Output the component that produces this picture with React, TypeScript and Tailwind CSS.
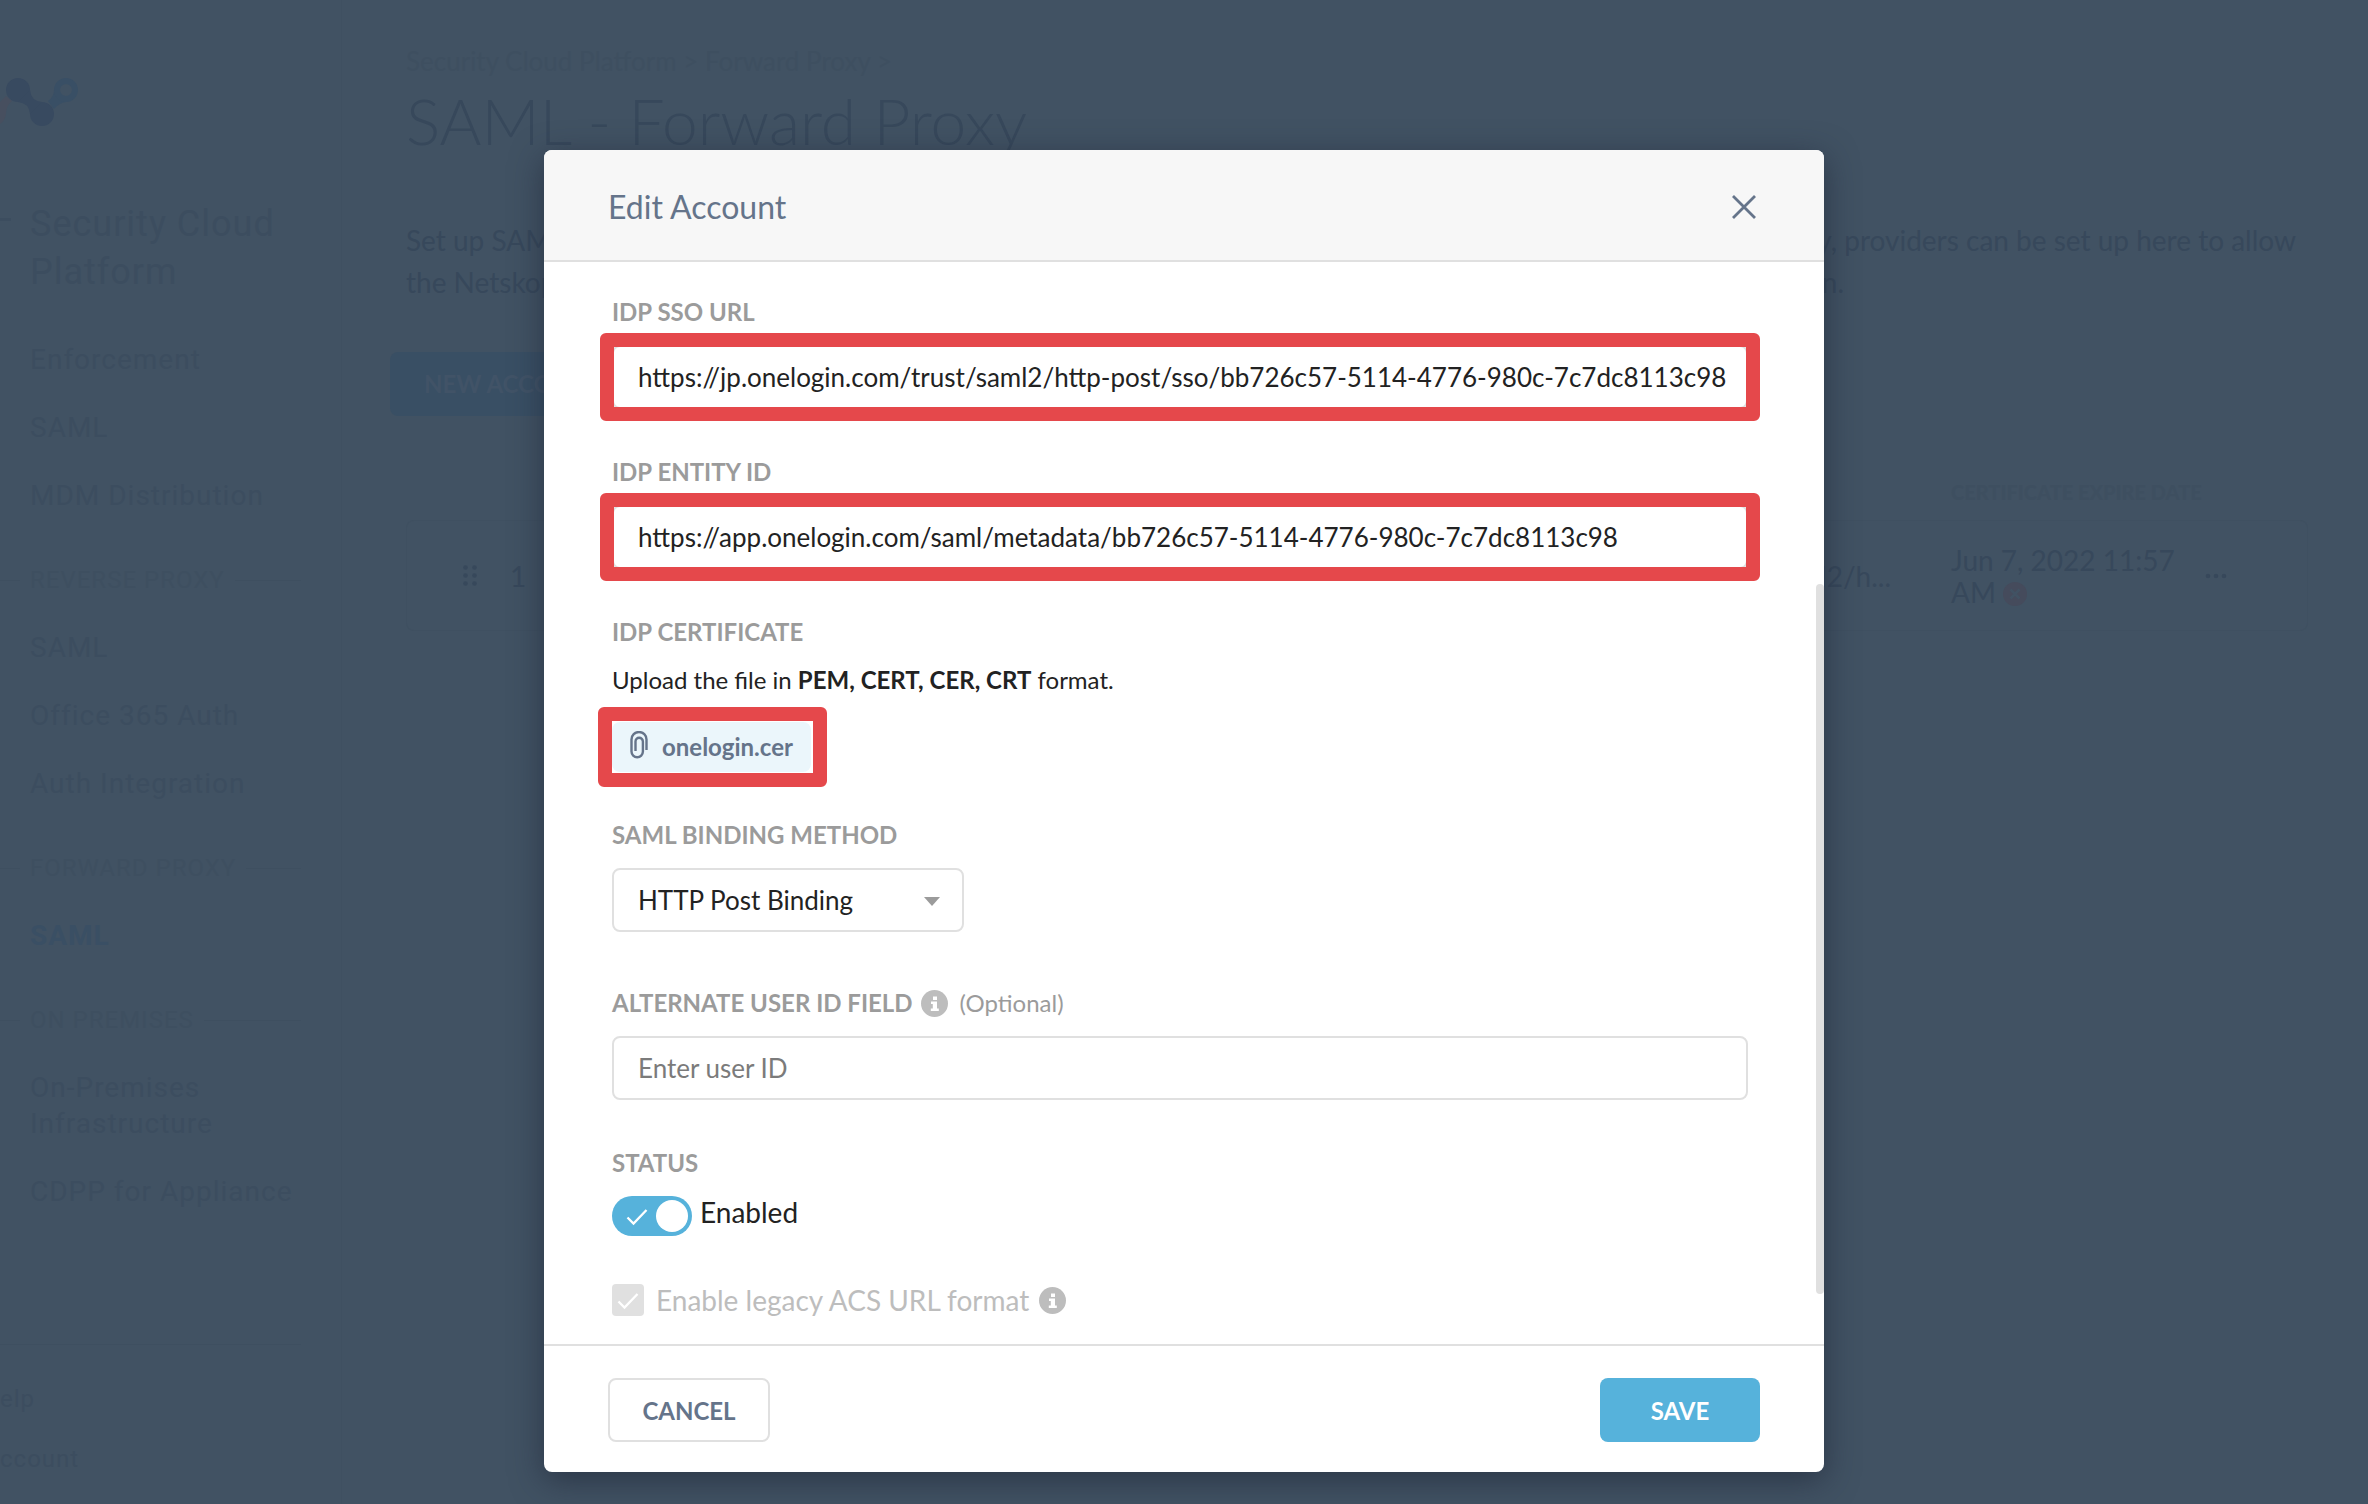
import { useState } from 'react';
import type { ReactNode } from 'react';

const RED_FRAME = 'pointer-events-none absolute rounded-[6px] border-[14px] border-[#e5484b]';
const LABEL = 'block text-[24px] leading-[30px] font-bold text-[#9b9b9b]';
const INPUT =
  'block h-16 w-full rounded-[8px] border-2 border-[#e0e0e0] bg-white pr-2 pl-6 text-[26px] text-[#222] outline-none placeholder:text-[#7b7b7b]';

const MAIN_LINKS = ['Enforcement', 'SAML', 'MDM Distribution'];
const REVERSE_LINKS = ['SAML', 'Office 365 Auth', 'Auth Integration'];
const PREMISES_LINKS = ['On-Premises Infrastructure', 'CDPP for Appliance'];

function Logo() {
  return (
    <svg width="78" height="48" viewBox="0 0 78 48" aria-label="Netskope" className="mt-[78px] block">
      <path d="M0 46 V24 L6 18 L12 23 Q6 28 6 36 Q5 43 0 46 Z" fill="#474f5f" />
      <circle cx="18" cy="12" r="12" fill="#384a60" />
      <circle cx="42" cy="36" r="12" fill="#384a60" />
      <path d="M30 12 Q31 23 42 24 L30 36 Q29 25 18 24 Z" fill="#384a60" />
      <path d="M48 23 Q54 19 54 12 L66 24 Q59 25 54 31 Z" fill="#394f65" />
      <circle cx="66" cy="12" r="9" fill="none" stroke="#394f65" strokeWidth="6" />
    </svg>
  );
}

function NavLinks({ items }: { items: string[] }) {
  return (
    <ul className="flex flex-col gap-8 pl-[30px]">
      {items.map((t) => (
        <li key={t}>
          <a href="#" className="block text-[28px] leading-9 tracking-[1px]">{t}</a>
        </li>
      ))}
    </ul>
  );
}

function NavHeading({ children }: { children: ReactNode }) {
  return (
    <div className="mt-[50px] mb-[34px] flex items-center gap-[10px] text-[#3e4f60]">
      <span className="h-px w-5 bg-[#3e4f60]" />
      <h3 className="text-[24px] leading-8 tracking-[1px]">{children}</h3>
      <span className="h-px flex-1 bg-[#3e4f60]" />
    </div>
  );
}

function Sidebar() {
  return (
    <aside className="w-[342px] shrink-0 border-r border-[#3f5061] pr-10 font-['Roboto',sans-serif] text-[#3c4d5f]">
      <Logo />
      <div className="mt-[74px] flex items-start gap-[19px]">
        <span className="mt-[18px] h-[3px] w-[11px] shrink-0 bg-[#3c4d5f]" />
        <h2 className="text-[36px] leading-[48px] tracking-[1px]">Security Cloud Platform</h2>
      </div>
      <nav className="mt-[46px]">
        <NavLinks items={MAIN_LINKS} />
        <NavHeading>REVERSE PROXY</NavHeading>
        <NavLinks items={REVERSE_LINKS} />
        <NavHeading>FORWARD PROXY</NavHeading>
        <a href="#" className="block pl-[30px] text-[28px] leading-9 font-bold tracking-[1px] text-[#3a4f64]">SAML</a>
        <NavHeading>ON PREMISES</NavHeading>
        <NavLinks items={PREMISES_LINKS} />
      </nav>
      <div className="mt-[134px] flex flex-col gap-7 border-t border-[#3e4f60] pt-[38px] text-[24px] leading-8 tracking-[1px]">
        <a href="#">elp</a>
        <a href="#">ccount</a>
      </div>
    </aside>
  );
}

function AccountsTable() {
  const td = 'h-[111px] border-y border-[#3f5061] p-0 align-middle';
  return (
    <table className="mt-16 w-full table-fixed border-separate border-spacing-0 text-left text-[28px] leading-8 text-[#37485b]">
      <colgroup>
        <col className="w-[104px]" />
        <col className="w-[100px]" />
        <col />
        <col className="w-[254px]" />
        <col className="w-[103px]" />
      </colgroup>
      <thead>
        <tr className="text-[20px] leading-6 text-[#3e4f60]">
          <th /><th /><th />
          <th className="p-0 pb-4 font-black whitespace-nowrap">CERTIFICATE EXPIRE DATE</th>
          <th />
        </tr>
      </thead>
      <tbody>
        <tr>
          <td className={`${td} rounded-l-[8px] border-l pl-14`}>
            <svg width="14" height="21" viewBox="0 0 14 21" fill="currentColor">
              {[2.5, 10.5, 18.5].map((cy) => (
                <g key={cy}><circle cx="2.5" cy={cy} r="2.3" /><circle cx="11.5" cy={cy} r="2.3" /></g>
              ))}
            </svg>
          </td>
          <td className={td}>1</td>
          <td className={`${td} pr-[60px] text-right`}>saml2/h...</td>
          <td className={td}>
            Jun 7, 2022 11:57 AM{' '}
            <svg width="24" height="24" viewBox="0 0 24 24" className="inline-block align-[-3px]">
              <circle cx="12" cy="12" r="12" fill="#454b5c" />
              <path d="M7.5 7.5l9 9M16.5 7.5l-9 9" stroke="#415263" strokeWidth="2.6" />
            </svg>
          </td>
          <td className={`${td} rounded-r-[8px] border-r`}>
            <svg width="22" height="6" viewBox="0 0 22 6" fill="currentColor">
              <circle cx="3" cy="3" r="2.3" /><circle cx="11" cy="3" r="2.3" /><circle cx="19" cy="3" r="2.3" />
            </svg>
          </td>
        </tr>
      </tbody>
    </table>
  );
}

function Page() {
  return (
    <main className="min-w-0 flex-1 pt-[45px] pr-[60px] pl-16">
      <div className="text-[26px] leading-8 text-[#3e4f60]">Security Cloud Platform &gt; Forward Proxy &gt;</div>
      <h1 className="mt-1 text-[64px] leading-[80px] font-light text-[#37485b]">SAML - Forward Proxy</h1>
      <div className="mt-[58px] text-[28px] leading-[42px] text-[#37485b]">
        <p className="flex justify-between pr-3">
          <span>Set up SAML</span>
          <span>Additionally, providers can be set up here to allow</span>
        </p>
        <p className="flex justify-between pr-[464px]">
          <span>the Netskope</span>
          <span>application.</span>
        </p>
      </div>
      <button className="mt-[49px] -ml-4 block h-16 rounded-[8px] bg-[#394f64] px-[34px] text-[24px] font-bold text-[#415367]">
        NEW ACCOUNT
      </button>
      <AccountsTable />
    </main>
  );
}

function InfoIcon() {
  return (
    <svg width="27" height="27" viewBox="0 0 27 27" className="shrink-0">
      <circle cx="13.5" cy="13.5" r="13.5" fill="#bdbdbd" />
      <path d="M12 6.5h4v3.600h-4zM10 11.600h6v7h1.800v2.400H9.800v-2.400h2v-4.600H10z" fill="#fff" />
    </svg>
  );
}

function Check({ className }: { className: string }) {
  return (
    <svg width="22" height="18" viewBox="0 0 22 18" fill="none" className={className}>
      <path d="M1.500 9.500l6 6L20.500 2" stroke="#fff" strokeWidth="2.300" />
    </svg>
  );
}

function EditAccountDialog() {
  const [ssoUrl, setSsoUrl] = useState('https://jp.onelogin.com/trust/saml2/http-post/sso/bb726c57-5114-4776-980c-7c7dc8113c98');
  const [entityId, setEntityId] = useState('https://app.onelogin.com/saml/metadata/bb726c57-5114-4776-980c-7c7dc8113c98');
  const [userId, setUserId] = useState('');
  const [enabled, setEnabled] = useState(true);

  return (
    <div
      role="dialog"
      aria-labelledby="dialog-title"
      className="w-full max-w-[1280px] overflow-hidden rounded-[8px] bg-white shadow-[0_8px_32px_rgba(30,38,55,0.65)]"
    >
      <header className="flex h-28 items-center justify-between border-b-2 border-[#e0e0e0] bg-[#f7f7f7] pt-1 pr-[68px] pl-16">
        <h2 id="dialog-title" className="text-[32px] leading-10 text-[#65748a]">Edit Account</h2>
        <button aria-label="Close">
          <svg width="24" height="24" viewBox="0 0 24 24" fill="none" stroke="#65748a" strokeWidth="2.800">
            <path d="M1 1l22 22M23 1L1 23" />
          </svg>
        </button>
      </header>

      <div className="relative pt-[35px] pr-[76px] pb-7 pl-[68px]">
        <label htmlFor="sso-url" className={LABEL}>IDP SSO URL</label>
        <div className="relative mt-[18px]">
          <input id="sso-url" className={INPUT} value={ssoUrl} onChange={(e) => setSsoUrl(e.target.value)} />
          <span className={`${RED_FRAME} -inset-3`} />
        </div>

        <label htmlFor="entity-id" className={`${LABEL} mt-12`}>IDP ENTITY ID</label>
        <div className="relative mt-[18px]">
          <input id="entity-id" className={INPUT} value={entityId} onChange={(e) => setEntityId(e.target.value)} />
          <span className={`${RED_FRAME} -inset-3`} />
        </div>

        <div className={`${LABEL} mt-12`}>IDP CERTIFICATE</div>
        <p className="mt-[18px] text-[24px] leading-[30px] text-[#222]">
          Upload the file in <b>PEM, CERT, CER, CRT</b> format.
        </p>
        <div className="relative mt-[27px] w-fit">
          <button className="flex h-[50px] items-center gap-[14px] rounded-[8px] bg-[#ebf6fb] px-[18px] text-[24px] font-bold text-[#65748a]">
            <svg width="18" height="28" viewBox="0 0 18 28" fill="none" stroke="currentColor" strokeWidth="2.400" className="-mt-1">
              <path d="M16.500 19V8.500a7.500 7.500 0 0 0-15 0v12a5.700 5.700 0 0 0 11.400 0V10.500a3.700 3.700 0 0 0-7.400 0V20" />
            </svg>
            onelogin.cer
          </button>
          <span className={`${RED_FRAME} -inset-y-[15px] -right-4 -left-3.5`} />
        </div>

        <label htmlFor="binding" className={`${LABEL} mt-12`}>SAML BINDING METHOD</label>
        <div className="relative mt-[18px] w-[352px]">
          <select id="binding" defaultValue="post" className={`${INPUT} appearance-none`}>
            <option value="post">HTTP Post Binding</option>
            <option value="redirect">HTTP Redirect</option>
          </select>
          <svg width="16" height="9" viewBox="0 0 16 9" className="pointer-events-none absolute top-[29px] right-6">
            <path d="M0 0h16l-8 9z" fill="#9b9b9b" />
          </svg>
        </div>

        <div className="mt-14 flex items-center">
          <label htmlFor="user-id" className={LABEL}>ALTERNATE USER ID FIELD</label>
          <span className="ml-2"><InfoIcon /></span>
          <span className="ml-3 text-[24px] leading-[30px] text-[#9b9b9b]">(Optional)</span>
        </div>
        <input
          id="user-id"
          placeholder="Enter user ID"
          className={`${INPUT} mt-[18px]`}
          value={userId}
          onChange={(e) => setUserId(e.target.value)}
        />

        <div className={`${LABEL} mt-12`}>STATUS</div>
        <label className="mt-[18px] flex w-fit items-start gap-2 text-[28px] leading-8 text-[#222]">
          <span className="relative block h-10 w-20">
            <input
              type="checkbox"
              role="switch"
              checked={enabled}
              onChange={(e) => setEnabled(e.target.checked)}
              className="peer block h-10 w-20 appearance-none rounded-full bg-[#bdbdbd] checked:bg-[#56b2db]"
            />
            <Check className="pointer-events-none absolute top-3 left-3.5" />
            <span className="pointer-events-none absolute top-1 left-1 size-8 rounded-full bg-white peer-checked:left-11" />
          </span>
          Enabled
        </label>

        <div className="mt-12 flex items-center">
          <label className="flex items-center gap-3 text-[28px] leading-8 text-[#bdbdbd]">
            <span className="relative block size-8">
              <input type="checkbox" defaultChecked disabled className="block size-8 appearance-none rounded-[4px] bg-[#e0e0e0]" />
              <Check className="pointer-events-none absolute top-2 left-[5px]" />
            </span>
            Enable legacy ACS URL format
          </label>
          <span className="ml-[10px]"><InfoIcon /></span>
        </div>

        {/* scrollbar thumb */}
        <span className="absolute right-0 bottom-[50px] h-[710px] w-2 rounded-full bg-[#e0e0e0]" />
      </div>

      <footer className="flex justify-between border-t-2 border-[#e0e0e0] pt-8 pr-16 pb-[30px] pl-16 text-[24px] font-bold">
        <button className="h-16 w-[162px] rounded-[8px] border-2 border-[#e0e0e0] pt-0.5 text-[#65748a]">CANCEL</button>
        <button className="h-16 w-40 rounded-[8px] bg-[#56b2db] pt-0.5 text-white">SAVE</button>
      </footer>
    </div>
  );
}

export default function App() {
  return (
    <div className="relative min-h-screen bg-[#415263] font-['Lato',sans-serif]">
      <div className="flex min-h-screen">
        <Sidebar />
        <Page />
      </div>
      <div className="absolute inset-0 flex items-start justify-center pt-[150px]">
        <EditAccountDialog />
      </div>
    </div>
  );
}
